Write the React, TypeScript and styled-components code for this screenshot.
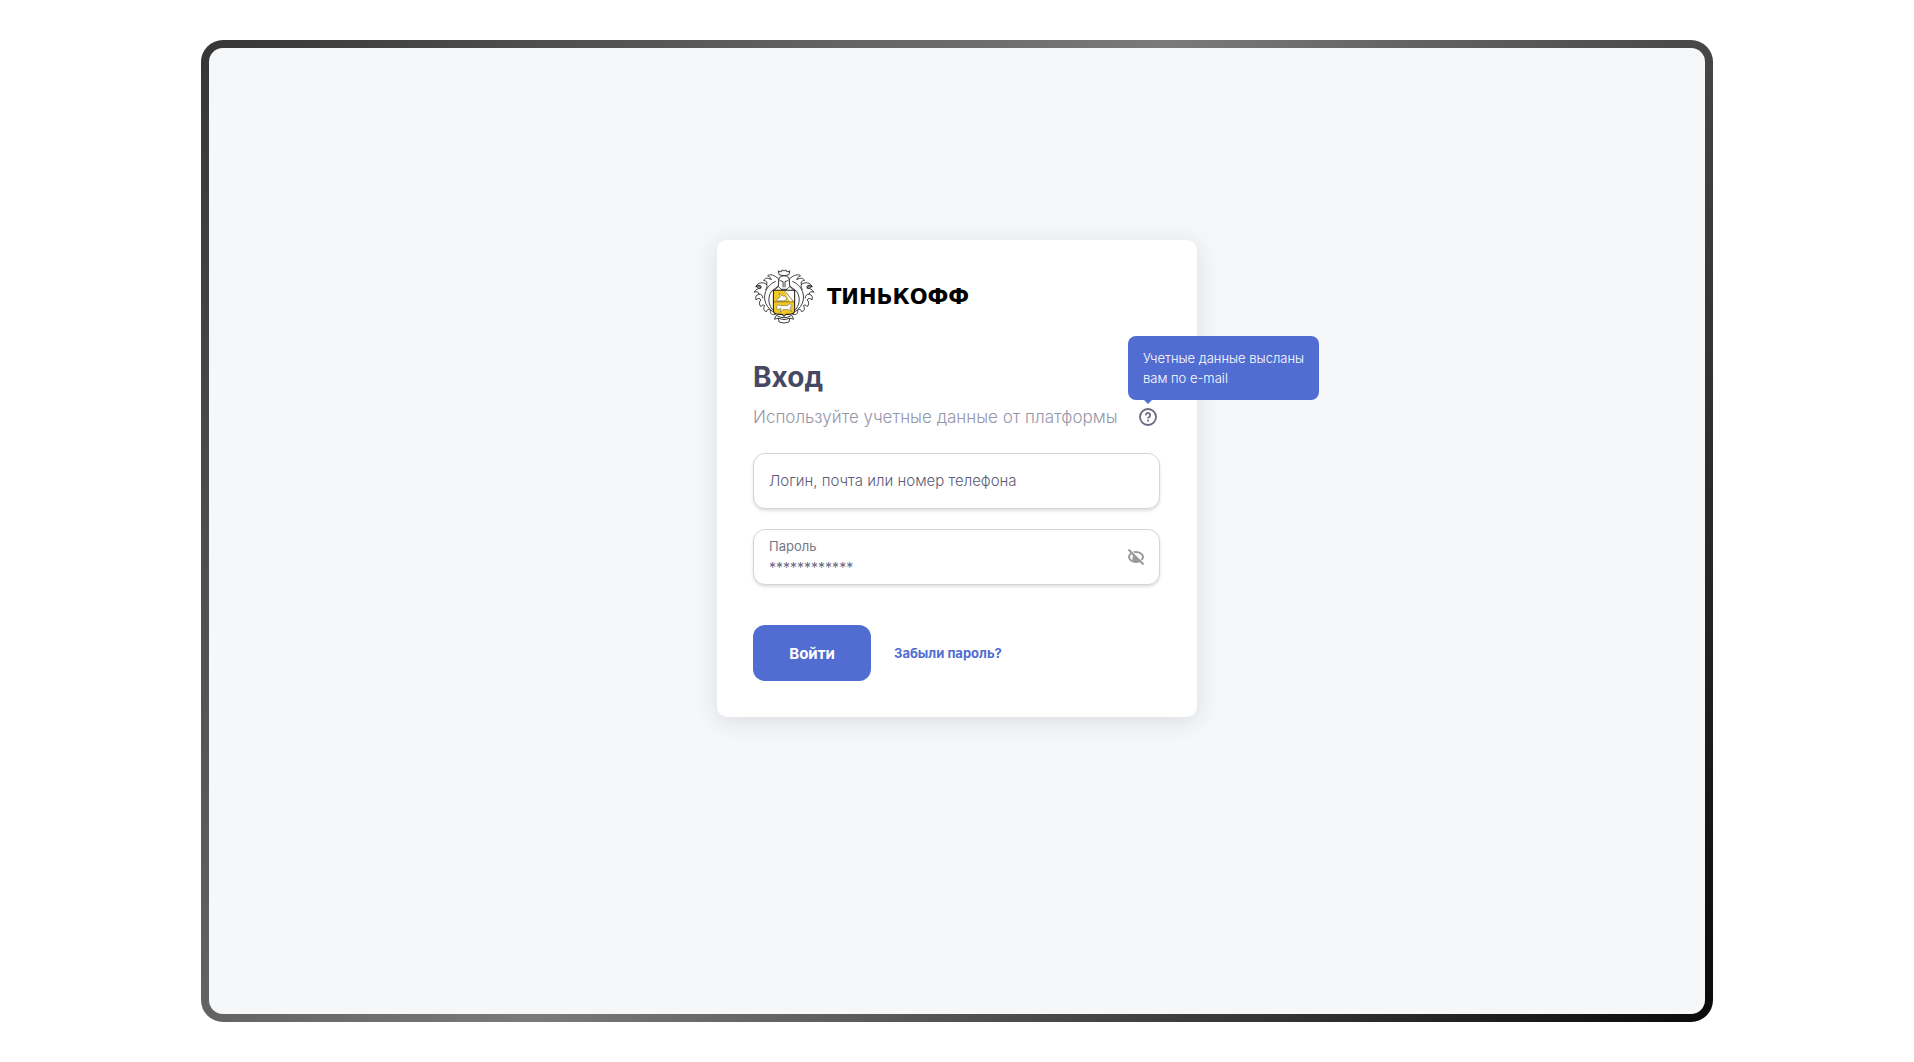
import React from "react";
import styled, { createGlobalStyle } from "styled-components";

const GlobalStyle = createGlobalStyle`
  *, *::before, *::after { box-sizing: border-box; }
  body { margin: 0; background: #ffffff; font-family: Inter, "Noto Sans", sans-serif; color: #686881; }
  button, input { font-family: inherit; }
`;

const Page = styled.div`
  display: flex;
  min-height: 100vh;
  padding: 40px 201px;
`;

const Screen = styled.main`
  flex: 1;
  display: flex;
  justify-content: center;
  align-items: flex-start;
  padding: 192px 24px;
  border: 8px solid transparent;
  border-radius: 22px;
  background:
    linear-gradient(#f5f7f9, #f5f7f9) padding-box,
    linear-gradient(123deg, #363636 0%, #7a7a7a 45%, #0a0a0a 100%) border-box;
`;

const Card = styled.form`
  display: flex;
  flex-direction: column;
  width: 480px;
  padding: 28px 37px 36px 36px;
  background: #ffffff;
  border-radius: 10px;
  box-shadow: 0 4px 24px rgba(40, 45, 55, 0.13);
`;

const Brand = styled.div`
  display: flex;
  align-items: center;
  gap: 10px;
  height: 58px;
`;

const BrandName = styled.span`
  font-family: "DejaVu Sans", sans-serif;
  font-size: 21px;
  line-height: 24px;
  font-weight: 700;
  color: #000000;
`;

const Title = styled.h1`
  margin: 33px 0 0;
  font-size: 28px;
  line-height: 36px;
  font-weight: 700;
  color: #464963;
`;

const Intro = styled.div`
  display: flex;
  align-items: center;
  justify-content: space-between;
  height: 24px;
  margin-top: 10px;
`;

const Hint = styled.p`
  margin: 0;
  font-size: 17px;
  line-height: 24px;
  font-weight: 300;
  white-space: nowrap;
  color: #9696a8;
`;

const HelpWrap = styled.span`
  position: relative;
  display: flex;
  padding: 0 3px;
`;

const IconButton = styled.button`
  display: flex;
  padding: 0;
  border: 0;
  background: none;
  color: inherit;
  cursor: pointer;
`;

const Tooltip = styled.span`
  position: absolute;
  left: -8px;
  bottom: 26px;
  padding: 12px 15px;
  border-radius: 8px;
  background: #516dd2;
  color: #ffffff;
  font-size: 13px;
  line-height: 20px;
  font-weight: 300;
  white-space: nowrap;

  &::after {
    content: "";
    position: absolute;
    left: 16px;
    top: 100%;
    border: 4px solid transparent;
    border-top-color: #516dd2;
    border-bottom: 0;
  }
`;

const Field = styled.div`
  display: flex;
  align-items: center;
  height: 56px;
  padding: 0 15px;
  border: 1px solid #d5d5d8;
  border-radius: 12px;
  background: #ffffff;
  box-shadow: 0 2px 3px rgba(0, 0, 0, 0.12);
`;

const Fields = styled.div`
  display: flex;
  flex-direction: column;
  gap: 20px;
  margin-top: 24px;
`;

const Stack = styled.div`
  flex: 1;
  display: flex;
  flex-direction: column;
  gap: 2px;
`;

const Label = styled.label`
  font-size: 13px;
  line-height: 20px;
  color: #777789;
`;

const Input = styled.input<{ $compact?: boolean }>`
  width: 100%;
  padding: 0;
  border: 0;
  outline: 0;
  background: none;
  font-size: ${(p) => (p.$compact ? 14 : 15)}px;
  line-height: 20px;
  color: #686881;

  &::placeholder { color: #5c5c76; font-weight: 300; opacity: 1; }
`;

const Actions = styled.div`
  display: flex;
  align-items: center;
  gap: 23px;
  margin-top: 40px;
`;

const Submit = styled.button`
  height: 56px;
  width: 118px;
  border: 0;
  border-radius: 12px;
  background: #516dd2;
  color: #ffffff;
  font-size: 15px;
  font-weight: 700;
  cursor: pointer;
`;

const Forgot = styled.a`
  font-size: 13px;
  line-height: 20px;
  font-weight: 700;
  color: #516dd2;
  text-decoration: none;
`;

const Plume = () => (
  <g fill="#fff" stroke="#222" strokeWidth=".9" strokeLinejoin="round" strokeLinecap="round">
    <path d="M26 10C22 6 17 5 15 7C18 8 18 10 19 11C15 9 12 9 11 12C14 12 15 14 14 16C10 13 5 14 3 18C7 17 9 19 8 20C5 20 3 21 1 24C4 23 6 24 6 26C3 27 2 29 3 32C5 30 7 30 8 32C6 34 6 37 8 39C9 37 11 37 12 38C10 41 11 44 14 44C14 42 16 41 18 43C17 46 20 48 23 47L22 44C15 38 15 29 19 23L27 17Z" />
    <path d="M23 13C15 16 11 24 12 32C13 37 16 41 20 44M14 16C15 18 14 20 13 21M6 26C9 26 10 28 10 30M3 18C6 16 9 17 8 19C6 20 4 20 3 18" fill="none" />
  </g>
);

const Crest = () => (
  <svg width="64" height="56" viewBox="0 0 66 58" aria-hidden="true">
    <Plume />
    <g transform="translate(64 0) scale(-1 1)"><Plume /></g>
    <g fill="#fff" stroke="#222" strokeWidth=".9" strokeLinejoin="round">
      <path d="M27 6L26 2L29 3L30 1L32 2L34 1L35 3L38 2L37 6Q32 8 27 6Z" />
      <path d="M27 9Q32 5 37 9L38 18L35 21H29L26 18Z" />
      <path d="M28 12L31 13V19M36 12L33 13V19M26 18L21 23M38 18L43 23M29 21L32 23L35 21" fill="none" />
      <path d="M24 48L22 52L26 51L27 55Q32 57 37 55L38 51L42 52L40 48Q32 53 24 48Z" />
      <path d="M26 51Q32 54 38 51" fill="none" />
    </g>
    <path d="M21 22H43V43Q43 47 37 47H34L32 49L30 47H27Q21 47 21 43Z" fill="#f2c923" />
    <path d="M32 22H43V34H38Z" fill="#fff" />
    <path d="M21 34H43M32 22L42 34" stroke="#7a6c30" strokeWidth=".9" fill="none" />
    <path d="M24 32L28 29L27 25L30 28L33 28L35 31L32 33H25Z" fill="#fff" stroke="#666" strokeWidth=".6" />
    <path d="M24 39L26 37L28 38L35 38L38 36L40 38L38 41L40 44L36 42H31L28 45L29 41L25 42Z" fill="#fff" stroke="#666" strokeWidth=".6" />
    <path d="M21 22H43V43Q43 47 37 47H34L32 49L30 47H27Q21 47 21 43Z" fill="none" stroke="#222" strokeWidth="1.1" />
  </svg>
);

const HelpIcon = () => (
  <svg width="18" height="18" viewBox="0 0 18 18" fill="none" stroke="#686881" aria-hidden="true">
    <circle cx="9" cy="9" r="8" strokeWidth="1.8" />
    <path d="M6.8 7.2A2.2 2.2 0 1 1 10.2 9C9.3 9.5 9 9.8 9 10.6" strokeWidth="1.8" />
    <path d="M9 11.8V13.4" strokeWidth="1.8" />
  </svg>
);

const EyeOffIcon = () => (
  <svg width="16" height="16" viewBox="0 0 16 16" aria-hidden="true">
    <ellipse cx="8" cy="8" rx="7" ry="5" fill="none" stroke="#999" strokeWidth="2" />
    <path d="M4.8 4.8L11.2 11.2A3.3 3.3 0 0 1 4.8 8Z" fill="#999" />
    <path d="M1.2 -.4L16.4 14.8" stroke="#fff" strokeWidth="1.4" />
    <path d="M.5 .5L15.5 15.5" stroke="#999" strokeWidth="2" />
  </svg>
);

export default function App() {
  const [visible, setVisible] = React.useState(true);
  return (
    <>
      <GlobalStyle />
      <Page>
        <Screen>
          <Card onSubmit={(event) => event.preventDefault()}>
            <Brand>
              <Crest />
              <BrandName>ТИНЬКОФФ</BrandName>
            </Brand>
            <Title>Вход</Title>
            <Intro>
              <Hint>Используйте учетные данные от платформы</Hint>
              <HelpWrap>
                <IconButton type="button" aria-label="Справка" aria-describedby="login-tip">
                  <HelpIcon />
                </IconButton>
                <Tooltip id="login-tip" role="tooltip">
                  Учетные данные высланы<br />вам по e-mail
                </Tooltip>
              </HelpWrap>
            </Intro>
            <Fields>
              <Field>
                <Input aria-label="Логин, почта или номер телефона" placeholder="Логин, почта или номер телефона" />
              </Field>
              <Field>
                <Stack>
                  <Label htmlFor="password">Пароль</Label>
                  <Input $compact id="password" type={visible ? "text" : "password"} defaultValue="************" />
                </Stack>
                <IconButton type="button" aria-label="Показать пароль" onClick={() => setVisible(!visible)}>
                  <EyeOffIcon />
                </IconButton>
              </Field>
            </Fields>
            <Actions>
              <Submit type="submit">Войти</Submit>
              <Forgot href="#restore">Забыли пароль?</Forgot>
            </Actions>
          </Card>
        </Screen>
      </Page>
    </>
  );
}
